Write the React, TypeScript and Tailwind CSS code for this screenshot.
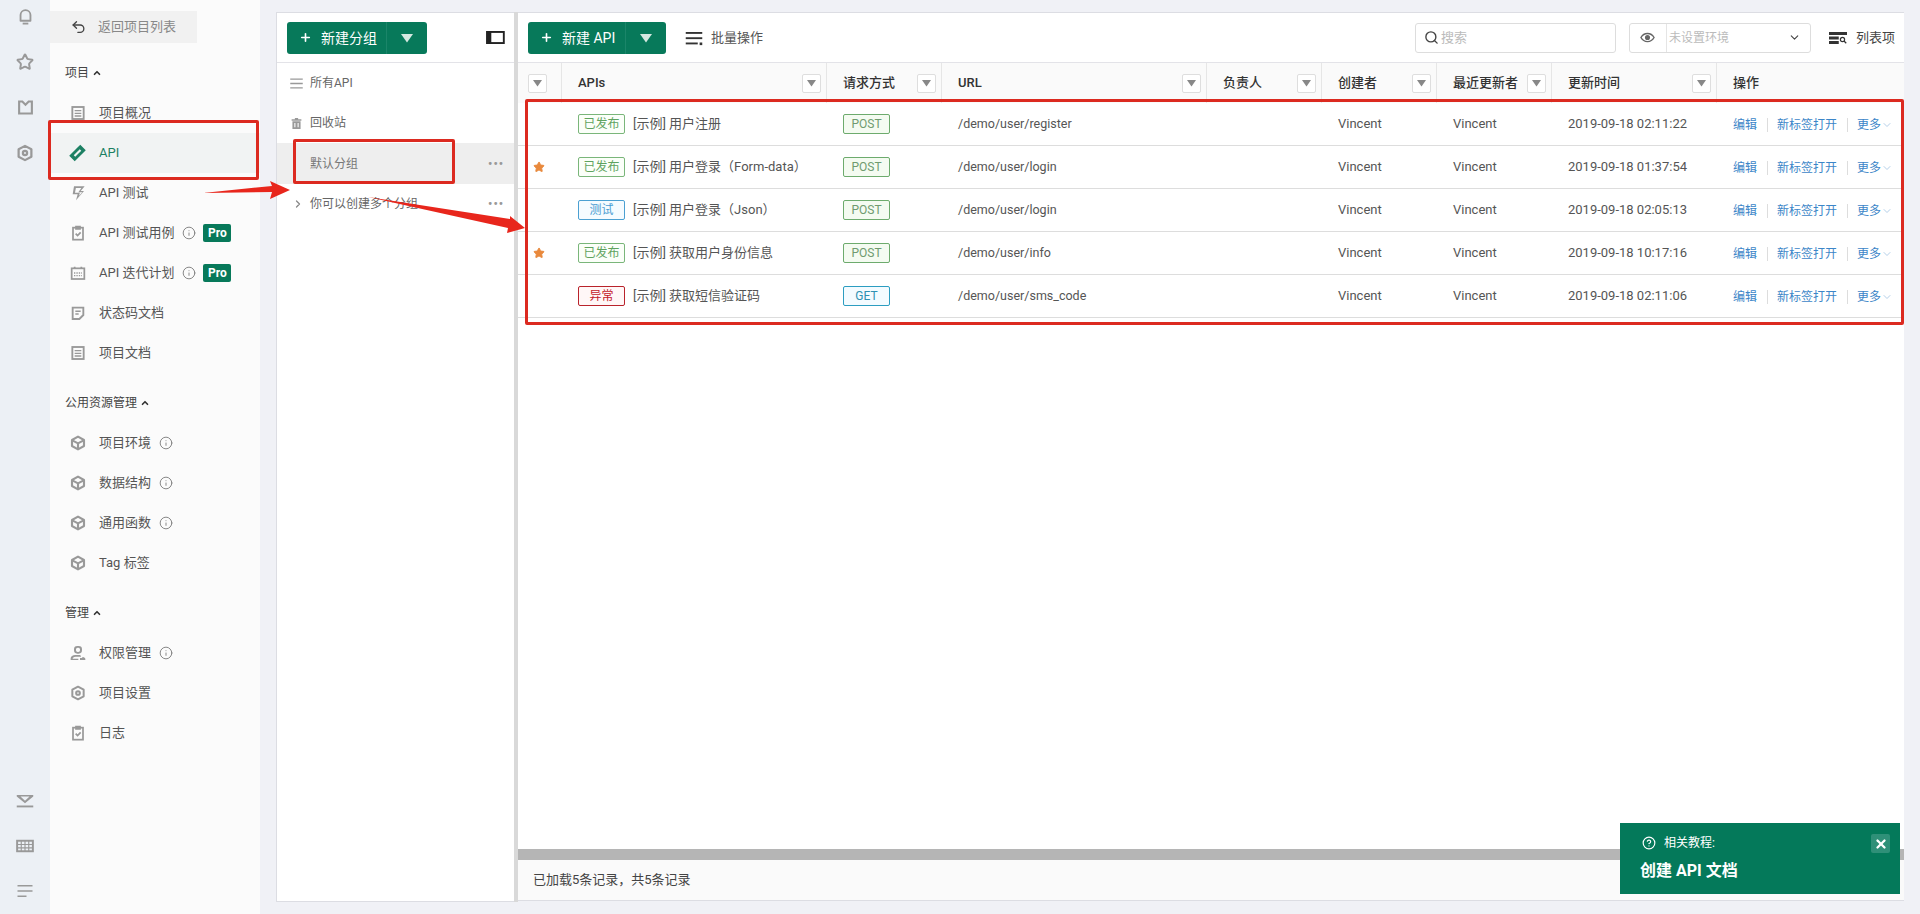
//App.tsx

import React from "react";
import { ChevronDown, ChevronRight, ChevronUp, CircleHelp, Info, Plus, Search, Star, Undo2, X } from "lucide-react";

const FONT = "font-['Roboto','Noto_Sans_CJK_SC',sans-serif]";

type IconProps = { className?: string };

const Svg: React.FC<IconProps & { children: React.ReactNode; sw?: number }> = ({ className, children, sw = 2 }) => (
  <svg viewBox="0 0 24 24" fill="none" stroke="currentColor" strokeWidth={sw} className={className}>
    {children}
  </svg>
);

const BellIcon = ({ className }: IconProps) => (
  <Svg className={className} sw={2.600}>
    <path d="M5 18V10a7 7 0 0 1 14 0v8z" strokeLinejoin="round" />
    <path d="M8 22h8" />
  </Svg>
);
const ShirtIcon = ({ className }: IconProps) => (
  <Svg className={className} sw={3}>
    <path d="M3 3.500h4.500L12 8l4.500-4.500H21v17H3z" />
  </Svg>
);
const GearIcon = ({ className }: IconProps) => (
  <Svg className={className} sw={3}>
    <path d="M12 2.500 20.500 7v10L12 21.500 3.500 17V7z" strokeLinejoin="round" />
    <circle cx="12" cy="12" r="2.800" />
  </Svg>
);
const CubeIcon = ({ className }: IconProps) => (
  <Svg className={className} sw={3.200}>
    <path d="M12 2.500 21 7.500v9L12 21.500 3 16.500v-9z" strokeLinejoin="round" />
    <path d="M3.500 8 12 12.500 20.500 8M12 12.500V21" />
  </Svg>
);
const CollapseIcon = ({ className }: IconProps) => (
  <svg viewBox="0 0 24 24" className={className} fill="currentColor">
    <path d="M1 4h22v2L12 15 1 6zM6 6l6 5.500L18 6z" fillRule="evenodd" />
    <rect x="1" y="18" width="22" height="2.500" />
  </svg>
);
const KeyboardIcon = ({ className }: IconProps) => (
  <Svg className={className} sw={2.600}>
    <rect x="1.500" y="5" width="21" height="14" />
    <path d="M1.500 10h21M1.500 14.500h21" strokeWidth={1.500} />
    <path d="M7 5v14M12 5v14M17 5v14" strokeWidth={1.500} />
  </Svg>
);
const LinesIcon = ({ className }: IconProps) => (
  <Svg className={className} sw={2.200}>
    <path d="M2 5h20M2 12h20M2 19h12" />
  </Svg>
);
const MenuIcon = ({ className }: IconProps) => (
  <Svg className={className} sw={2.200}>
    <path d="M2 5h20M2 12h20M2 19h20" />
  </Svg>
);
const DocIcon = ({ className }: IconProps) => (
  <Svg className={className} sw={2.800}>
    <rect x="3.500" y="3" width="17" height="18" />
    <path d="M7 8.500h10M7 12.500h10M7 16.500h10" strokeWidth={2} />
  </Svg>
);
const TicketIcon = ({ className }: IconProps) => (
  <svg viewBox="0 0 24 24" className={className} fill="currentColor">
    <g transform="rotate(-45 12 12)">
      <path d="M1 6.500h22v11H1zM6 10.500v3h12v-3z" fillRule="evenodd" />
    </g>
  </svg>
);
const BoltIcon = ({ className }: IconProps) => (
  <svg viewBox="0 0 24 24" className={className} fill="currentColor">
    <path d="M6 2h16l-6 7h5L9 23l2.500-9H4zM8.800 4.500 7.500 11.500h7.300L13.500 16l5-5h-6l4.500-6.500z" fillRule="evenodd" />
  </svg>
);
const ClipboardIcon = ({ className }: IconProps) => (
  <Svg className={className} sw={2.600}>
    <rect x="4.500" y="4" width="15" height="18" />
    <path d="M9 2.500h6V6H9z" fill="currentColor" />
    <path d="m8.500 13 2.800 2.800L16 11" />
  </Svg>
);
const CalendarIcon = ({ className }: IconProps) => (
  <Svg className={className} sw={2.600}>
    <rect x="2.500" y="5" width="19" height="16" />
    <path d="M7 2.500V6M17 2.500V6" />
    <path d="M6 12h12M6 16h12" strokeWidth={2} strokeDasharray="2 1.600" />
  </Svg>
);
const NoteIcon = ({ className }: IconProps) => (
  <Svg className={className} sw={2.800}>
    <path d="M4 4h16v11l-6 6H4z" />
    <path d="M8 9.500h8M8 13.500h5" strokeWidth={2.200} />
  </Svg>
);
const UserIcon = ({ className }: IconProps) => (
  <svg viewBox="0 0 24 24" className={className} fill="currentColor">
    <path d="M11 1.500h2a5 5 0 0 1 5 5V8a5 5 0 0 1-5 5h-2a5 5 0 0 1-5-5V6.500a5 5 0 0 1 5-5zm.5 2.500a2.500 2.500 0 0 0-2.500 2.500V8a2.500 2.500 0 0 0 2.500 2.500h1A2.500 2.500 0 0 0 15 8V6.500A2.500 2.500 0 0 0 12.500 4z" fillRule="evenodd" />
    <path d="M1 22.500v-2.500c0-3 3-5 7-5h6c1.500 0 2.500 1 2.500 2.500h-8c-3 0-4.500 1.500-4.500 3h8.500v2zM15 19.500h2.500c.5 0 1-.5 1.500-1.500 2.500.5 4 1.500 4 3v1.500h-8z" />
  </svg>
);
const PanelIcon = ({ className }: IconProps) => (
  <Svg className={className} sw={2.400}>
    <rect x="1.500" y="5" width="21" height="14" />
    <rect x="1.500" y="5" width="4" height="14" fill="currentColor" />
  </Svg>
);
const TrashIcon = ({ className }: IconProps) => (
  <svg viewBox="0 0 24 24" className={className} fill="currentColor">
    <path d="M9 2h6v2h6v3H3V4h6z" />
    <path d="M4.500 8h15v14h-15zM8 11v8h2v-8zm6 0v8h2v-8z" fillRule="evenodd" />
  </svg>
);
const BatchIcon = ({ className }: IconProps) => (
  <svg viewBox="0 0 24 24" className={className} fill="currentColor">
    <rect x="1" y="4" width="22" height="2.500" />
    <rect x="1" y="11" width="22" height="2.500" />
    <rect x="1" y="18" width="16" height="2.500" />
    <rect x="19.500" y="18" width="3.500" height="3.500" />
  </svg>
);
const EyeIcon = ({ className }: IconProps) => (
  <Svg className={className} sw={2.200}>
    <path d="M1.500 12C4 7.500 8 5.500 12 5.500s8 2 10.500 6.500C20 16.500 16 18.500 12 18.500S4 16.500 1.500 12z" />
    <circle cx="12" cy="12" r="3" fill="currentColor" />
  </Svg>
);
const ColumnsIcon = ({ className }: IconProps) => (
  <svg viewBox="0 0 24 18" className={className} fill="currentColor">
    <path d="M0 1h24v4H0zM0 7h13v4H0zM0 13h13v4H0z" />
    <circle cx="18" cy="11" r="2.800" fill="none" stroke="currentColor" strokeWidth="1.600" />
    <path d="m20 13 3 3" stroke="currentColor" strokeWidth="1.600" />
  </svg>
);

const Triangle = ({ className }: IconProps) => (
  <svg viewBox="0 0 12 10" className={className} fill="currentColor">
    <path d="M0 1h12L6 9.500z" />
  </svg>
);

const InfoDot = () => <Info className="w-[14px] h-[14px] text-[#777] ml-2 shrink-0" strokeWidth={1.500} />;

const ProBadge = () => (
  <span className="ml-[7px] w-7 h-[18px] rounded-[2px] bg-[#07795a] text-white text-xs font-bold flex items-center justify-center">
    Pro
  </span>
);

type NavItem = { icon: React.ReactNode; label: string; info?: boolean; pro?: boolean; active?: boolean };

const iconCls = "w-4 h-4 text-[#999]";

const projectNav: NavItem[] = [
  { icon: <DocIcon className={iconCls} />, label: "项目概况" },
  { icon: <TicketIcon className="w-[18px] h-[18px] text-[#1d8063]" />, label: "API", active: true },
  { icon: <BoltIcon className={iconCls} />, label: "API 测试" },
  { icon: <ClipboardIcon className={iconCls} />, label: "API 测试用例", info: true, pro: true },
  { icon: <CalendarIcon className={iconCls} />, label: "API 迭代计划", info: true, pro: true },
  { icon: <NoteIcon className={iconCls} />, label: "状态码文档" },
  { icon: <DocIcon className={iconCls} />, label: "项目文档" },
];

const resourceNav: NavItem[] = [
  { icon: <CubeIcon className={iconCls} />, label: "项目环境", info: true },
  { icon: <CubeIcon className={iconCls} />, label: "数据结构", info: true },
  { icon: <CubeIcon className={iconCls} />, label: "通用函数", info: true },
  { icon: <CubeIcon className={iconCls} />, label: "Tag 标签" },
];

const manageNav: NavItem[] = [
  { icon: <UserIcon className={iconCls} />, label: "权限管理", info: true },
  { icon: <GearIcon className={iconCls} />, label: "项目设置" },
  { icon: <ClipboardIcon className={iconCls} />, label: "日志" },
];

const NavRow: React.FC<{ item: NavItem }> = ({ item }) => (
  <div
    className={
      "h-10 flex items-center pl-[19px] text-[13px] " +
      (item.active ? "bg-[#f1f3f3] text-[#1d8063]" : "text-[#555]")
    }
  >
    <span className="w-[17px] flex justify-center">{item.icon}</span>
    <span className="ml-[13px]">{item.label}</span>
    {item.info && <InfoDot />}
    {item.pro && <ProBadge />}
  </div>
);

const NavSection: React.FC<{ title: string; items: NavItem[] }> = ({ title, items }) => (
  <div className="mb-[10px]">
    <div className="h-10 flex items-center pl-[15px] text-xs text-[#444]">
      {title}
      <ChevronUp className="w-[10px] h-[10px] ml-[3px] text-[#333]" strokeWidth={4} />
    </div>
    {items.map((item) => (
      <NavRow key={item.label} item={item} />
    ))}
  </div>
);

const SplitButton: React.FC<{ label: string; w: string; main: string }> = ({ label, w, main }) => (
  <div className={"h-[32px] rounded-[3px] bg-[#07795a] text-white flex items-center text-sm " + w}>
    <div className={"h-full flex items-center pl-3 gap-[9px] border-r border-[#1b8569] " + main}>
      <Plus className="w-[13px] h-[13px]" strokeWidth={3} />
      <span>{label}</span>
    </div>
    <div className="flex-1 flex justify-center">
      <Triangle className="w-3 h-2.5 text-[#d5e8e1]" />
    </div>
  </div>
);

const FilterButton: React.FC<{ className?: string }> = ({ className }) => (
  <span
    className={
      "w-[19px] h-[19px] bg-white border border-[#dedede] rounded-[2px] flex items-center justify-center shrink-0 " +
      (className ?? "")
    }
  >
    <Triangle className="w-[9px] h-[8px] text-[#888]" />
  </span>
);

const COLS = "grid grid-cols-[44px_265px_115px_265px_115px_115px_115px_165px_187px]";

const headers = ["APIs", "请求方式", "URL", "负责人", "创建者", "最近更新者", "更新时间"];

const TAG_STYLES: Record<string, string> = {
  已发布: "border-[#7ab67a] bg-[#fbfff9] text-[#5fa35f]",
  测试: "border-[#4ba0d2] bg-[#f5fbff] text-[#4a9bd2]",
  异常: "border-[#b9232b] bg-[#fff7f7] text-[#c3202a]",
  POST: "border-[#6dab6d] bg-[#f4fbf1] text-[#6f9b6f]",
  GET: "border-[#2c9dc1] bg-[#f3fbff] text-[#2f90b2]",
};

const Tag: React.FC<{ text: string }> = ({ text }) => (
  <span
    className={
      "w-[47px] h-5 border rounded-[2px] text-xs flex items-center justify-center shrink-0 " + TAG_STYLES[text]
    }
  >
    {text}
  </span>
);

const apis = [
  { star: false, status: "已发布", name: "[示例] 用户注册", method: "POST", url: "/demo/user/register", time: "2019-09-18 02:11:22" },
  { star: true, status: "已发布", name: "[示例] 用户登录（Form-data）", method: "POST", url: "/demo/user/login", time: "2019-09-18 01:37:54" },
  { star: false, status: "测试", name: "[示例] 用户登录（Json）", method: "POST", url: "/demo/user/login", time: "2019-09-18 02:05:13" },
  { star: true, status: "已发布", name: "[示例] 获取用户身份信息", method: "POST", url: "/demo/user/info", time: "2019-09-18 10:17:16" },
  { star: false, status: "异常", name: "[示例] 获取短信验证码", method: "GET", url: "/demo/user/sms_code", time: "2019-09-18 02:11:06" },
];

const Rail = () => (
  <div className="w-[50px] shrink-0 bg-[#ecf0f5] flex flex-col justify-between items-center text-[#999] pb-[14px]">
    <div className="flex flex-col items-center gap-7 pt-2">
      <BellIcon className="w-[17px] h-[17px]" />
      <Star className="w-[18px] h-[18px]" strokeWidth={2.600} />
      <ShirtIcon className="w-[17px] h-[17px]" />
      <GearIcon className="w-[18px] h-[18px]" />
    </div>
    <div className="flex flex-col items-center gap-[27px]">
      <CollapseIcon className="w-[18px] h-[18px]" />
      <KeyboardIcon className="w-[18px] h-[18px]" />
      <LinesIcon className="w-[18px] h-[18px]" />
    </div>
  </div>
);

const Sidebar = () => (
  <div className="w-[210px] shrink-0 bg-[#fbfbfb] pt-[11px]">
    <div className="w-[147px] h-8 bg-[#f1f1f1] flex items-center pl-5 text-[13px] text-[#888]">
      <Undo2 className="w-[17px] h-4 text-[#444]" strokeWidth={2} />
      <span className="ml-[11px]">返回项目列表</span>
    </div>
    <div className="mt-[10px]">
      <NavSection title="项目" items={projectNav} />
      <NavSection title="公用资源管理" items={resourceNav} />
      <NavSection title="管理" items={manageNav} />
    </div>
  </div>
);

const GroupPanel = () => (
  <div className="w-[238px] shrink-0 bg-white border border-r-0 border-[#dcdde3] text-xs text-[#666]">
    <div className="h-[50px] flex items-center justify-between pl-[10px] pr-[9px] border-b border-[#e3e3e8]">
      <SplitButton label="新建分组" w="w-[140px]" main="w-[100px]" />
      <PanelIcon className="w-[19px] h-[19px] text-[#222]" />
    </div>
    <div className="h-10 flex items-center pl-[12px]">
      <MenuIcon className="w-[15px] h-[15px] text-[#999]" />
      <span className="ml-[6px]">所有API</span>
    </div>
    <div className="h-10 flex items-center pl-[13px]">
      <TrashIcon className="w-[13px] h-[13px] text-[#999]" />
      <span className="ml-[7px]">回收站</span>
    </div>
    <div className="h-[41px] flex items-center justify-between pl-[33px] pr-[10px] bg-[#eeeeee] text-[#777]">
      <span>默认分组</span>
      <span className="text-[#999] font-bold tracking-[1px]">•••</span>
    </div>
    <div className="h-10 flex items-center justify-between pl-[15px] pr-[10px]">
      <span className="flex items-center">
        <ChevronRight className="w-3 h-3 text-[#888]" strokeWidth={2.500} />
        <span className="ml-[6px]">你可以创建多个分组</span>
      </span>
      <span className="text-[#999] font-bold tracking-[1px]">•••</span>
    </div>
  </div>
);

const ApiPanel = () => (
  <div className="flex-1 min-w-0 mb-px bg-white border-y border-[#dcdde3] flex flex-col relative">
    <div className="h-[50px] shrink-0 flex items-center pl-[10px] pr-[9px] border-b border-[#e3e3e8]">
      <SplitButton label="新建 API" w="w-[138px]" main="w-[98px]" />
      <BatchIcon className="w-[18px] h-[18px] ml-[19px] text-[#333]" />
      <span className="ml-[8px] text-[13px] text-[#555]">批量操作</span>
      <div className="ml-auto w-[201px] h-[30px] border border-[#ddd] rounded-[3px] flex items-center pl-[8px]">
        <Search className="w-[15px] h-[15px] text-[#444]" strokeWidth={2.200} />
        <span className="ml-[2px] text-[13px] text-[#bbb]">搜索</span>
      </div>
      <div className="ml-[13px] w-[182px] h-[30px] border border-[#ddd] rounded-[3px] flex items-center">
        <span className="w-[37px] h-full border-r border-[#e5e5e5] flex items-center justify-center">
          <EyeIcon className="w-[15px] h-[15px] text-[#666]" />
        </span>
        <span className="ml-[2px] text-xs text-[#bbb]">未设置环境</span>
        <ChevronDown className="w-[13px] h-[13px] ml-auto mr-[9px] text-[#444]" strokeWidth={2} />
      </div>
      <ColumnsIcon className="w-[18px] h-[14px] ml-[18px] text-[#333]" />
      <span className="ml-[9px] text-[13px] text-[#444]">列表项</span>
    </div>

    <div className={COLS + " h-[40px] shrink-0 bg-[#fafafa] text-[13px] font-medium text-[#333]"}>
      <div className="flex items-center pl-[10px] border-r border-[#e6e6e6]">
        <FilterButton />
      </div>
      {headers.map((h) => (
        <div key={h} className="flex items-center justify-between pl-4 pr-[5px] border-r border-[#e6e6e6]">
          <span>{h}</span>
          <FilterButton />
        </div>
      ))}
      <div className="flex items-center pl-4">操作</div>
    </div>

    {apis.map((api) => (
      <div key={api.name} className={COLS + " h-[43px] shrink-0 border-b border-[#ddd] text-[13px] text-[#555] items-center"}>
        <div className="pl-[15px]">
          {api.star && <Star className="w-[12px] h-[12px] text-[#e9893c]" fill="currentColor" />}
        </div>
        <div className="flex items-center pl-4">
          <Tag text={api.status} />
          <span className="ml-2 whitespace-nowrap">{api.name}</span>
        </div>
        <div className="pl-4">
          <Tag text={api.method} />
        </div>
        <div className="pl-4 text-[12.500px]">{api.url}</div>
        <div />
        <div className="pl-4">Vincent</div>
        <div className="pl-4">Vincent</div>
        <div className="pl-4">{api.time}</div>
        <div className="flex items-center pl-4 mt-px text-xs text-[#3c86c8]">
          <span>编辑</span>
          <span className="w-px h-[14px] bg-[#ddd] ml-[10px] mr-[9px]" />
          <span>新标签打开</span>
          <span className="w-px h-[14px] bg-[#ddd] ml-[10px] mr-[9px]" />
          <span>更多</span>
          <ChevronDown className="w-3 h-3 text-[#9bbfe0]" strokeWidth={1.500} />
        </div>
      </div>
    ))}

    <div className="flex-1" />
    <div className="h-[11px] shrink-0 bg-[#b5b5b5]" />
    <div className="h-10 shrink-0 bg-[#fafafa] flex items-center pl-[15px] text-[13px] text-[#444]">
      已加载5条记录，共5条记录
    </div>
  </div>
);

// red annotation boxes and arrows drawn on top of the screenshot
const Annotations = () => (
  <>
    <div className="absolute left-[48px] top-[120px] w-[211px] h-[60px] border-[3px] border-[#dc2a20] rounded-[2px] pointer-events-none" />
    <div className="absolute left-[293px] top-[139px] w-[162px] h-[45px] border-[3px] border-[#dc2a20] rounded-[2px] pointer-events-none" />
    <div className="absolute left-[525px] top-[99px] w-[1379px] h-[226px] border-[3px] border-[#dc2a20] rounded-[2px] pointer-events-none" />
    <svg className="absolute left-0 top-0 w-[600px] h-[300px] pointer-events-none" viewBox="0 0 600 300" fill="#e8261c">
      <path d="M203 193 L272 186 L270 181 L290 190 L270 199 L272 192 Z" />
      <path d="M368 197 L510 219 L510 216 L525 228 L507 233 L508 228 Z" />
    </svg>
  </>
);

const TutorialCard = () => (
  <div className="absolute right-5 bottom-5 w-[280px] h-[71px] bg-[#04795a] text-white pl-5 pt-[12px]">
    <div className="flex items-center pl-[2px] text-xs">
      <CircleHelp className="w-[14px] h-[14px]" strokeWidth={2} />
      <span className="ml-2">相关教程:</span>
    </div>
    <div className="mt-[10px] text-base font-bold leading-5">创建 API 文档</div>
    <span className="absolute right-[10px] top-[11px] w-[19px] h-[19px] rounded-[2px] bg-[#2f9078] flex items-center justify-center">
      <X className="w-[14px] h-[14px]" strokeWidth={4} />
    </span>
  </div>
);

const App: React.FC = () => {
  return (
    <div className={"relative w-[1920px] h-[914px] overflow-hidden flex bg-[#f0f1f6] " + FONT}>
      <Rail />
      <Sidebar />
      <div className="flex-1 min-w-0 flex pl-4 pr-4 pt-3 pb-3">
        <GroupPanel />
        <div className="w-1 shrink-0 bg-[#d9d9d9]" />
        <ApiPanel />
      </div>
      <Annotations />
      <TutorialCard />
    </div>
  );
};

export default App;
